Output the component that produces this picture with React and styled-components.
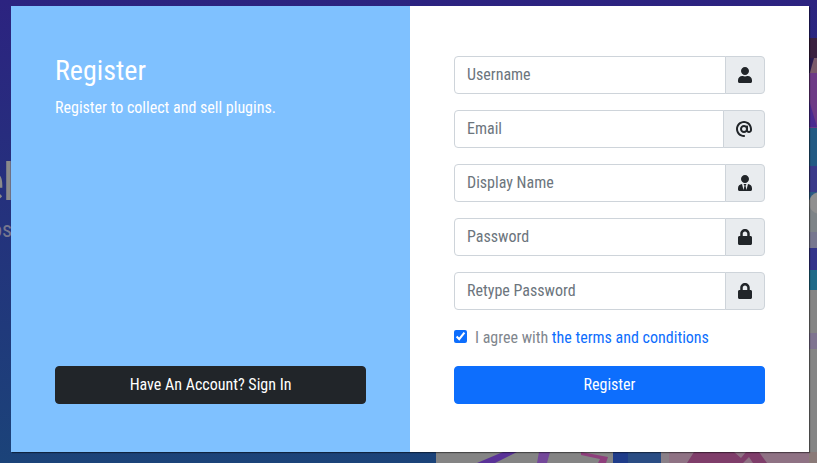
import styled, { createGlobalStyle } from "styled-components";
import { FaUser, FaUserTie, FaLock } from "react-icons/fa";
import { FaAt } from "react-icons/fa6";

const fields = [
  { name: "Username", icon: <FaUser />, wide: false },
  { name: "Email", icon: <FaAt />, wide: true },
  { name: "Display Name", icon: <FaUserTie />, wide: false },
  { name: "Password", icon: <FaLock />, wide: false },
  { name: "Retype Password", icon: <FaLock />, wide: false },
];

function App() {
  return (
    <>
      <GlobalStyle />
      <Backdrop>
        <svg width="817" height="463" viewBox="0 0 817 463">
          <defs>
            <linearGradient id="bg" x1="0" y1="0" x2="0" y2="1">
              <stop offset="0" stopColor="#2c2380" />
              <stop offset="1" stopColor="#1b4379" />
            </linearGradient>
          </defs>
          <rect width="817" height="463" fill="url(#bg)" />
          {/* right edge of the page art */}
          <rect x="809" y="38" width="8" height="20" fill="#3a2040" />
          <path d="M809 58h8v15h-8z" fill="#7a5a6a" />
          <path d="M809 58l5 0-5 18z" fill="#2a1a50" />
          <rect x="809" y="73" width="8" height="55" fill="#6d3a86" />
          <path d="M809 100l8 27h-8z" fill="#4a2a90" />
          <rect x="809" y="128" width="8" height="38" fill="#235a84" />
          <rect x="809" y="166" width="8" height="26" fill="#3a3a8a" />
          <rect x="809" y="192" width="8" height="8" fill="#2a5a84" />
          <rect x="809" y="200" width="8" height="32" fill="#7e8488" />
          <circle cx="820" cy="203" r="11" fill="#909090" />
          <rect x="809" y="232" width="8" height="16" fill="#77778f" />
          <rect x="809" y="248" width="8" height="22" fill="#33348a" />
          <rect x="809" y="270" width="8" height="20" fill="#206a88" />
          <rect x="809" y="290" width="8" height="162" fill="#858585" />
          <rect x="809" y="333" width="8" height="16" fill="#7f7490" />
          <rect x="809" y="452" width="8" height="11" fill="#8a7a78" />
          {/* bottom edge of the page art */}
          <rect x="436" y="452" width="177" height="11" fill="#848484" />
          <rect x="613" y="452" width="15" height="11" fill="#1f3c8a" />
          <rect x="628" y="452" width="33" height="11" fill="#2a4d84" />
          <rect x="661" y="452" width="8" height="11" fill="#8a8088" />
          <rect x="669" y="452" width="140" height="11" fill="#8f7284" />
          <path d="M477 463l26-11h14l-22 11z" fill="#5a3298" />
          <path d="M539 452h11l-3 11h-10z" fill="#74489a" />
          <path d="M581 452l27 5-2 6h-8l2-4-19-4z" fill="#8e3f7c" />
          <path d="M687 463l7-11h40l7 6 5-6 13 0 8 11 h-14l-4-6-6 6z" fill="#7f3d6a" />
        </svg>
        <GhostTitle>el</GhostTitle>
        <GhostText>os</GhostText>
      </Backdrop>
      <Modal>
        <InfoPanel>
          <div>
            <Title>Register</Title>
            <Subtitle>Register to collect and sell plugins.</Subtitle>
          </div>
          <DarkButton type="button">Have An Account? Sign In</DarkButton>
        </InfoPanel>
        <FormPanel>
          <Fields>
            {fields.map((field) => (
              <InputGroup key={field.name}>
                <Input placeholder={field.name} />
                <Addon $wide={field.wide}>{field.icon}</Addon>
              </InputGroup>
            ))}
          </Fields>
          <Agree>
            <Checkbox type="checkbox" defaultChecked />
            <span>
              I agree with <TermsLink href="#">the terms and conditions</TermsLink>
            </span>
          </Agree>
          <PrimaryButton type="button">Register</PrimaryButton>
        </FormPanel>
      </Modal>
    </>
  );
}

export default App;

const GlobalStyle = createGlobalStyle`
  html, body {
    margin: 0;
    width: 817px;
    height: 463px;
    overflow: hidden;
    background: #1b4379;
  }
  * {
    box-sizing: border-box;
    font-family: "Roboto", "Liberation Sans", sans-serif;
    font-stretch: condensed;
  }
`;

const Backdrop = styled.div`
  position: absolute;
  inset: 0;
  overflow: hidden;
`;

const GhostTitle = styled.div`
  position: absolute;
  left: -20px;
  top: 152px;
  font-size: 52px;
  font-weight: 400;
  letter-spacing: -2px;
  line-height: 62px;
  color: #8a8a8a;
`;

const GhostText = styled.div`
  position: absolute;
  left: -9px;
  top: 217px;
  font-size: 22px;
  color: #77778f;
`;

const Modal = styled.div`
  position: relative;
  display: flex;
  width: 798px;
  height: 446px;
  margin: 6px 0 0 11px;
  background: #fff;
  box-shadow: 1px 1px 1px rgba(0, 0, 0, 0.45);
`;

const InfoPanel = styled.div`
  display: flex;
  flex-direction: column;
  justify-content: space-between;
  width: 399px;
  padding: 48px 44px;
  background: #7fc1ff;
  color: #fff;
`;

const Title = styled.h1`
  margin: 0 0 8px;
  font-size: 28px;
  font-weight: 400;
  line-height: 33.6px;
`;

const Subtitle = styled.p`
  margin: 0;
  font-size: 16px;
  line-height: 24px;
`;

const DarkButton = styled.button`
  height: 38px;
  padding: 0 12px 2px;
  border: 1px solid #212529;
  border-radius: 4px;
  background: #212529;
  color: #fff;
  font-size: 16px;
  font-weight: 400;
`;

const FormPanel = styled.div`
  flex: 1;
  display: flex;
  flex-direction: column;
  padding: 50px 44px 48px;
`;

const Fields = styled.div`
  display: flex;
  flex-direction: column;
  gap: 16px;
`;

const InputGroup = styled.div`
  display: flex;
  height: 38px;
`;

const Input = styled.input`
  flex: 1;
  min-width: 0;
  padding: 5px 12px 7px;
  border: 1px solid #ced4da;
  border-radius: 4px 0 0 4px;
  font-size: 16px;
  color: #212529;
  outline: none;

  &::placeholder {
    color: #6c757d;
    opacity: 1;
  }
`;

const Addon = styled.span`
  display: flex;
  align-items: center;
  justify-content: center;
  width: ${(props) => (props.$wide ? "42px" : "40px")};
  margin-left: -1px;
  border: 1px solid #ced4da;
  border-radius: 0 4px 4px 0;
  background: #e9ecef;
  color: #212529;
  font-size: 16px;
`;

const Agree = styled.label`
  display: flex;
  align-items: center;
  gap: 8px;
  height: 24px;
  margin-top: 15px;
  margin-bottom: 1px;
  font-size: 16px;
  color: #7f868d;
`;

const Checkbox = styled.input`
  width: 13px;
  height: 13px;
  margin: 0 0 1px;
  accent-color: #0d6efd;
`;

const TermsLink = styled.a`
  color: #0d6efd;
  text-decoration: none;
`;

const PrimaryButton = styled.button`
  height: 38px;
  margin-top: 16px;
  padding: 0 12px 2px;
  border: 1px solid #0d6efd;
  border-radius: 4px;
  background: #0d6efd;
  color: #fff;
  font-size: 16px;
  font-weight: 400;
`;
